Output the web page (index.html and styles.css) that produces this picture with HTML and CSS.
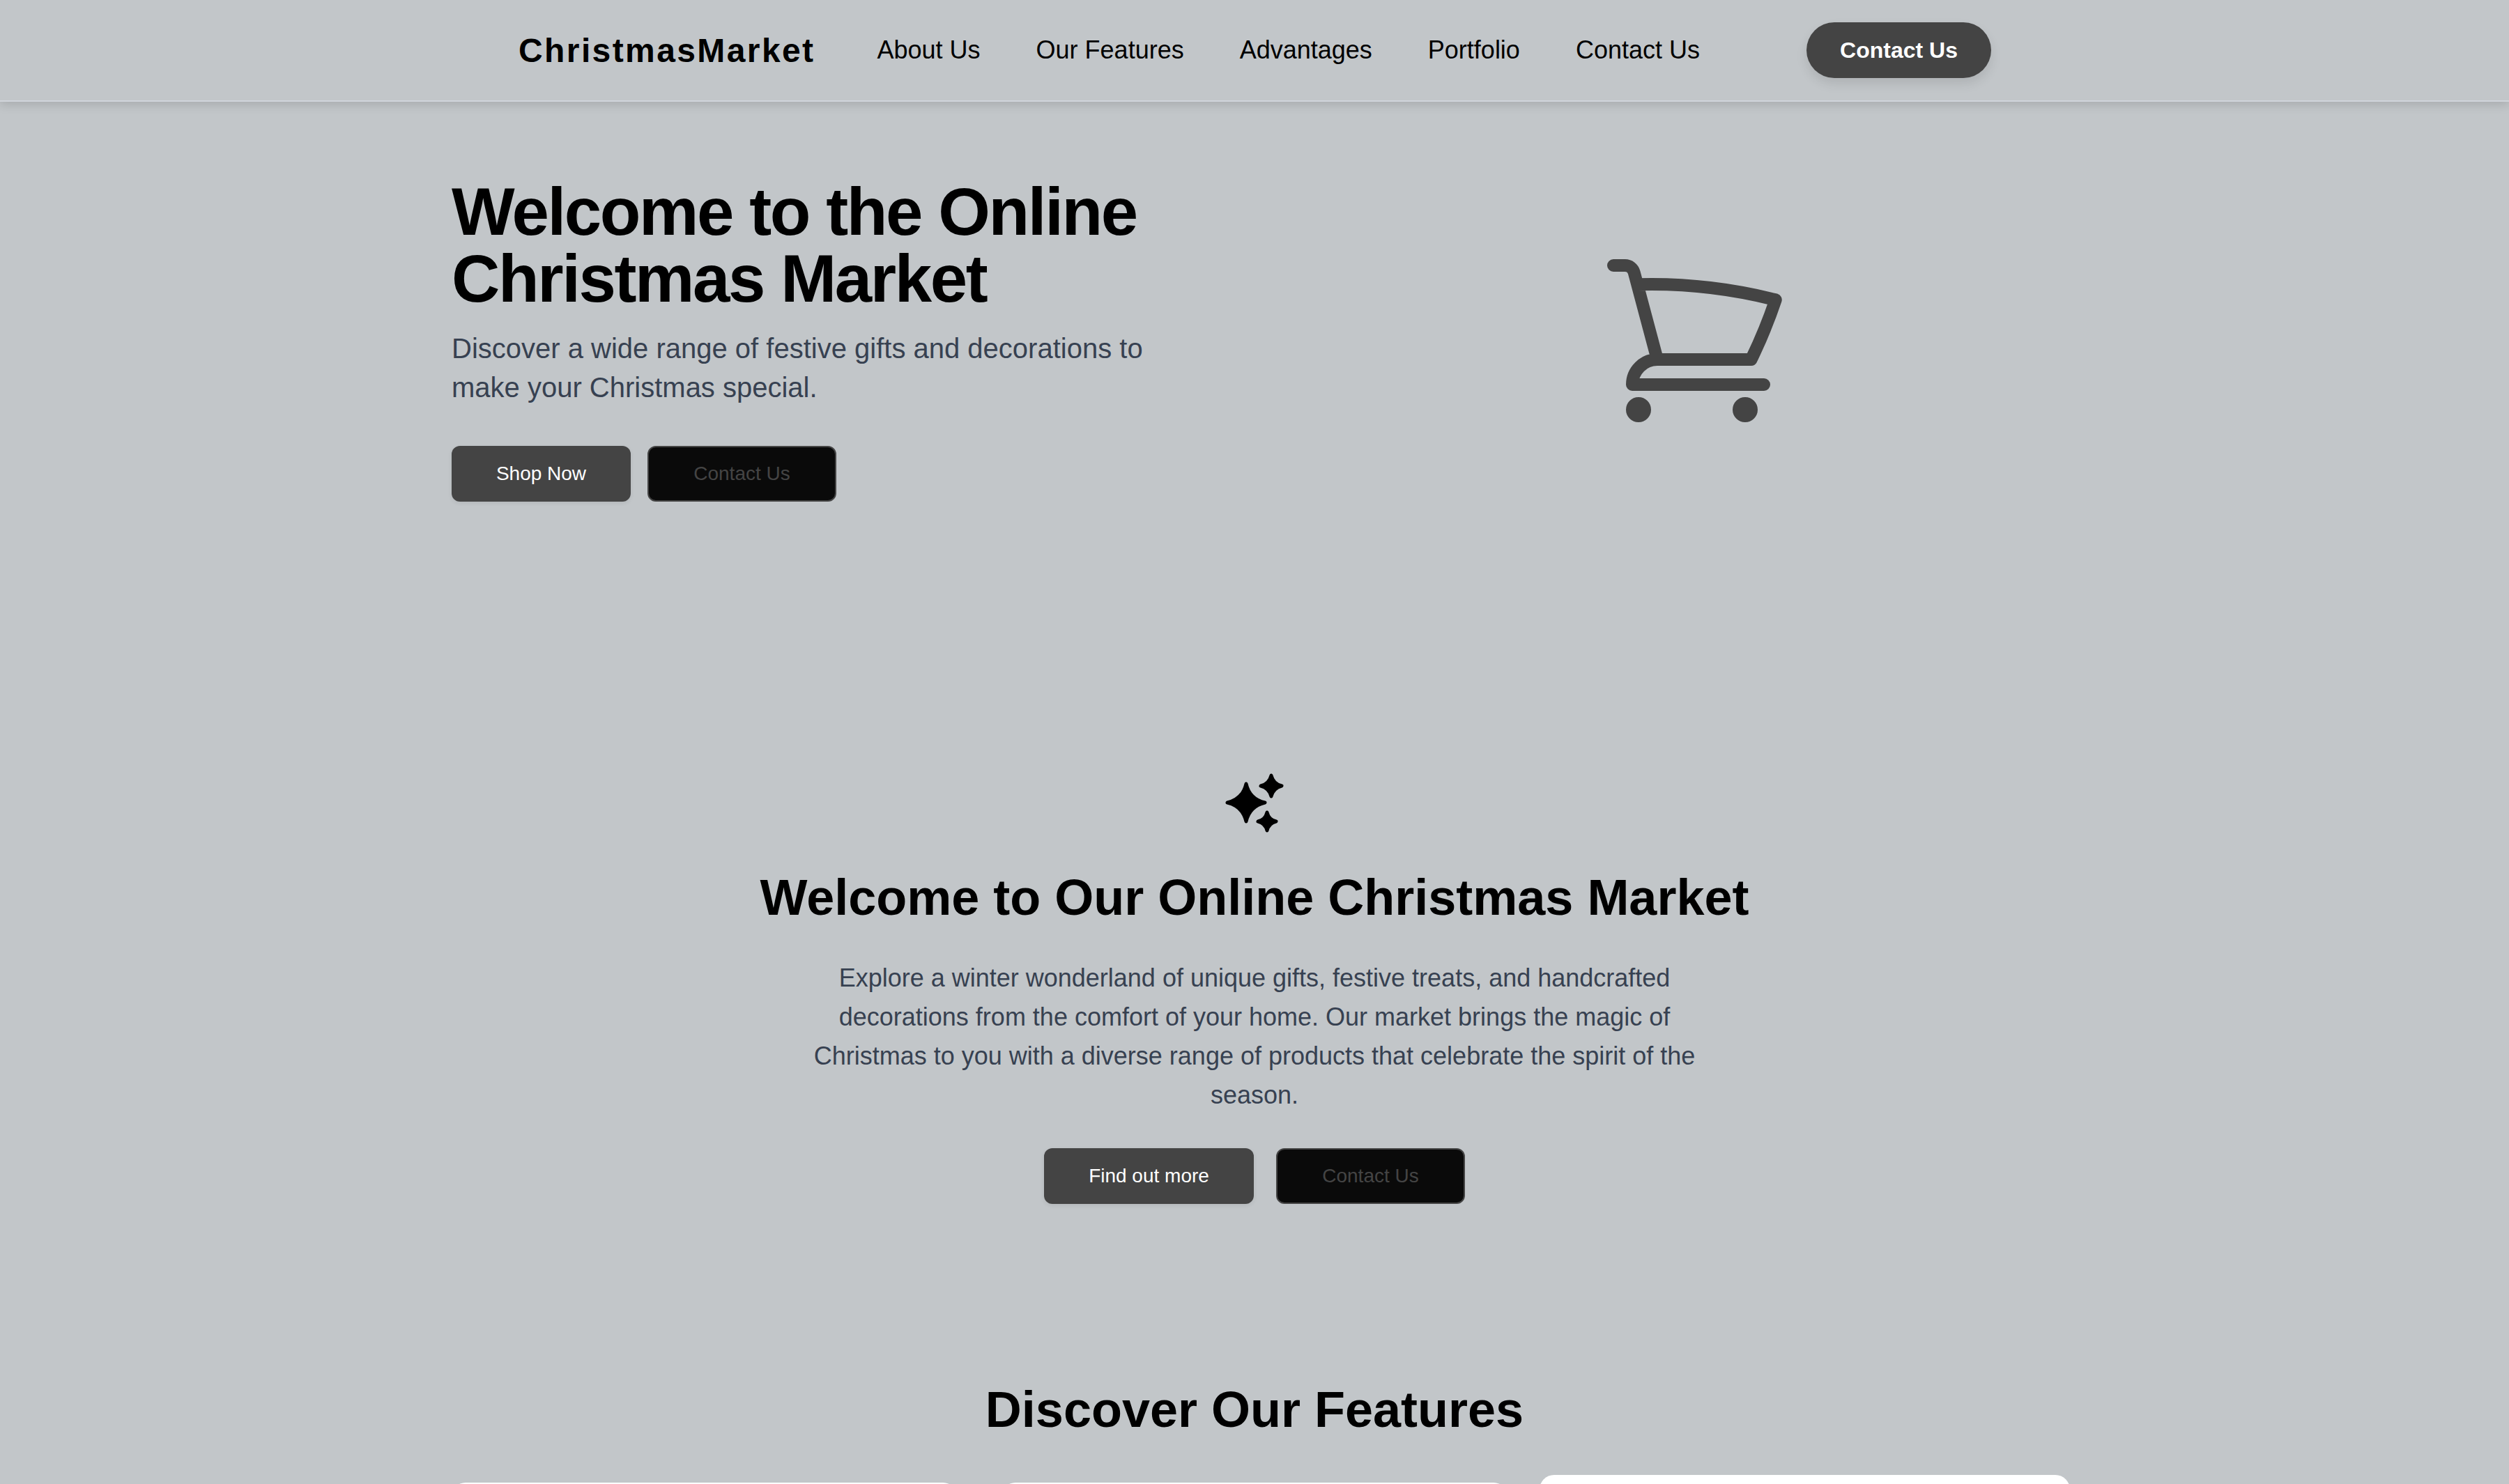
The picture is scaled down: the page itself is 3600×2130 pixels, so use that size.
FILE: index.html
```html
<!DOCTYPE html>
<html lang="en">
<head>
    <meta charset="UTF-8">
    <meta name="viewport" content="width=device-width, initial-scale=1.0">
    <title>Christmas Market</title>
    <link rel="stylesheet" href="styles.css">
</head>
<body>
    <nav class="navbar">
        <a class="logo" href="#">ChristmasMarket</a>
        <ul class="nav-links">
            <li><a href="#">About Us</a></li>
            <li><a href="#">Our Features</a></li>
            <li><a href="#">Advantages</a></li>
            <li><a href="#">Portfolio</a></li>
            <li><a href="#">Contact Us</a></li>
        </ul>
        <a class="nav-button" href="#">Contact Us</a>
    </nav>

    <section class="hero">
        <div class="hero-text">
            <h1>Welcome to the Online Christmas Market</h1>
            <p>Discover a wide range of festive gifts and decorations to make your Christmas special.</p>
            <div class="button-row">
                <a class="btn btn-primary btn-shop" href="#">Shop Now</a>
                <a class="btn btn-dark" href="#">Contact Us</a>
            </div>
        </div>
        <div class="hero-icon">
            <svg class="cart-icon" viewBox="0 0 24 24" fill="none" stroke="currentColor" stroke-width="1.5" stroke-linecap="round" stroke-linejoin="round">
                <path d="M2.25 3h1.386c.51 0 .955.343 1.087.835l.383 1.437M7.5 14.25a3 3 0 00-3 3h15.75m-12.75-3h11.218c1.121-2.3 2.1-4.684 2.924-7.138a60.114 60.114 0 00-16.536-1.84M7.5 14.25L5.106 5.272M6 20.25a.75.75 0 11-1.5 0 .75.75 0 011.5 0zm12.75 0a.75.75 0 11-1.5 0 .75.75 0 011.5 0z"/>
            </svg>
        </div>
    </section>

    <section class="welcome">
        <svg class="sparkle-icon" viewBox="0 0 160 130" fill="currentColor" stroke="currentColor" stroke-width="5" stroke-linejoin="round">
            <path d="M68 35Q73 57 95 62Q73 67 68 89Q63 67 41 62Q63 57 68 35Z"/>
            <path d="M104 23Q107 35 119 38Q107 41 104 53Q101 41 89 38Q101 35 104 23Z"/>
            <path d="M98 76Q100.500 86.500 111 89Q100.500 91.500 98 102Q95.500 91.500 85 89Q95.500 86.500 98 76Z"/>
        </svg>
        <h2>Welcome to Our Online Christmas Market</h2>
        <p>Explore a winter wonderland of unique gifts, festive treats, and handcrafted decorations from the comfort of your home. Our market brings the magic of Christmas to you with a diverse range of products that celebrate the spirit of the season.</p>
        <div class="button-row button-row-center">
            <a class="btn btn-primary btn-find" href="#">Find out more</a>
            <a class="btn btn-dark" href="#">Contact Us</a>
        </div>
    </section>

    <section class="features">
        <h2>Discover Our Features</h2>
        <div class="feature-grid">
            <div class="feature-card"></div>
            <div class="feature-card"></div>
            <div class="feature-card feature-card-big"></div>
        </div>
    </section>
</body>
</html>
```

FILE: styles.css
```css
* {
    box-sizing: border-box;
}
html, body {
    height: 100%;
}
body {
    margin: 0;
    height: 2130px;
    overflow: hidden;
    background-color: #c2c6c9;
    color: #000000;
    font-family: "Liberation Sans", Arial, sans-serif;
}
a {
    color: inherit;
    text-decoration: none;
}
.navbar {
    position: relative;
    display: flex;
    justify-content: center;
    align-items: center;
    height: 146px;
    padding-left: 1px;
    border-bottom: 2px solid #d1d5db;
    box-shadow: 0 4px 14px rgba(0, 0, 0, 0.14);
}
.logo {
    font-size: 48px;
    font-weight: 700;
    letter-spacing: 2.4px;
}
.nav-links {
    display: flex;
    gap: 80px;
    list-style: none;
    margin: 0 153px 0 89px;
    padding: 0;
    font-size: 36px;
}
.nav-button {
    display: flex;
    align-items: center;
    justify-content: center;
    width: 265px;
    height: 80px;
    border-radius: 40px;
    background-color: #444444;
    color: #ffffff;
    font-size: 32px;
    font-weight: 700;
    box-shadow: 0 8px 16px rgba(0, 0, 0, 0.1);
}
.hero {
    display: grid;
    grid-template-columns: 1264px 1040px;
    width: 2304px;
    height: 944px;
    margin: 0 auto;
    padding-top: 110px;
}
.hero-text {
    max-width: 1010px;
}
.hero h1 {
    margin: 0;
    font-size: 96px;
    line-height: 96px;
    font-weight: 700;
    letter-spacing: -2.4px;
}
.hero p {
    margin: 24px 0 0;
    font-size: 40px;
    line-height: 56px;
    color: #374151;
}
.button-row {
    display: flex;
    gap: 24px;
    margin-top: 56px;
}
.button-row-center {
    justify-content: center;
    gap: 32px;
    margin-top: 48px;
}
.btn {
    display: flex;
    align-items: center;
    justify-content: center;
    height: 80px;
    border-radius: 12px;
    font-size: 28px;
}
.btn-primary {
    background-color: #444444;
    color: #ffffff;
    box-shadow: 0 2px 6px rgba(0, 0, 0, 0.08);
}
.btn-shop {
    width: 257px;
}
.btn-find {
    width: 301px;
}
.btn-dark {
    width: 271px;
    background-color: #0a0a0a;
    color: #444444;
    border: 2px solid #444444;
}
.hero-icon {
    display: flex;
    justify-content: center;
    align-items: flex-start;
}
.cart-icon {
    width: 288px;
    height: 288px;
    margin-top: 89px;
    color: #444444;
}
.welcome {
    text-align: center;
}
.sparkle-icon {
    display: block;
    width: 160px;
    height: 130px;
    margin: 0 auto;
}
.welcome h2,
.features h2 {
    margin: 0;
    font-size: 72px;
    line-height: 80px;
    font-weight: 700;
}
.welcome h2 {
    margin-top: 28px;
}
.welcome p {
    width: 1280px;
    margin: 48px auto 0;
    font-size: 36px;
    line-height: 56px;
    color: #374151;
}
.features {
    margin-top: 255px;
    text-align: center;
}
.feature-grid {
    display: grid;
    grid-template-columns: repeat(3, 1fr);
    gap: 64px;
    width: 2304px;
    margin: 65px auto 0;
}
.feature-card {
    height: 440px;
    border-radius: 20px;
    background-color: #ffffff;
}
.feature-card-big {
    transform: scale(1.05);
}
```
